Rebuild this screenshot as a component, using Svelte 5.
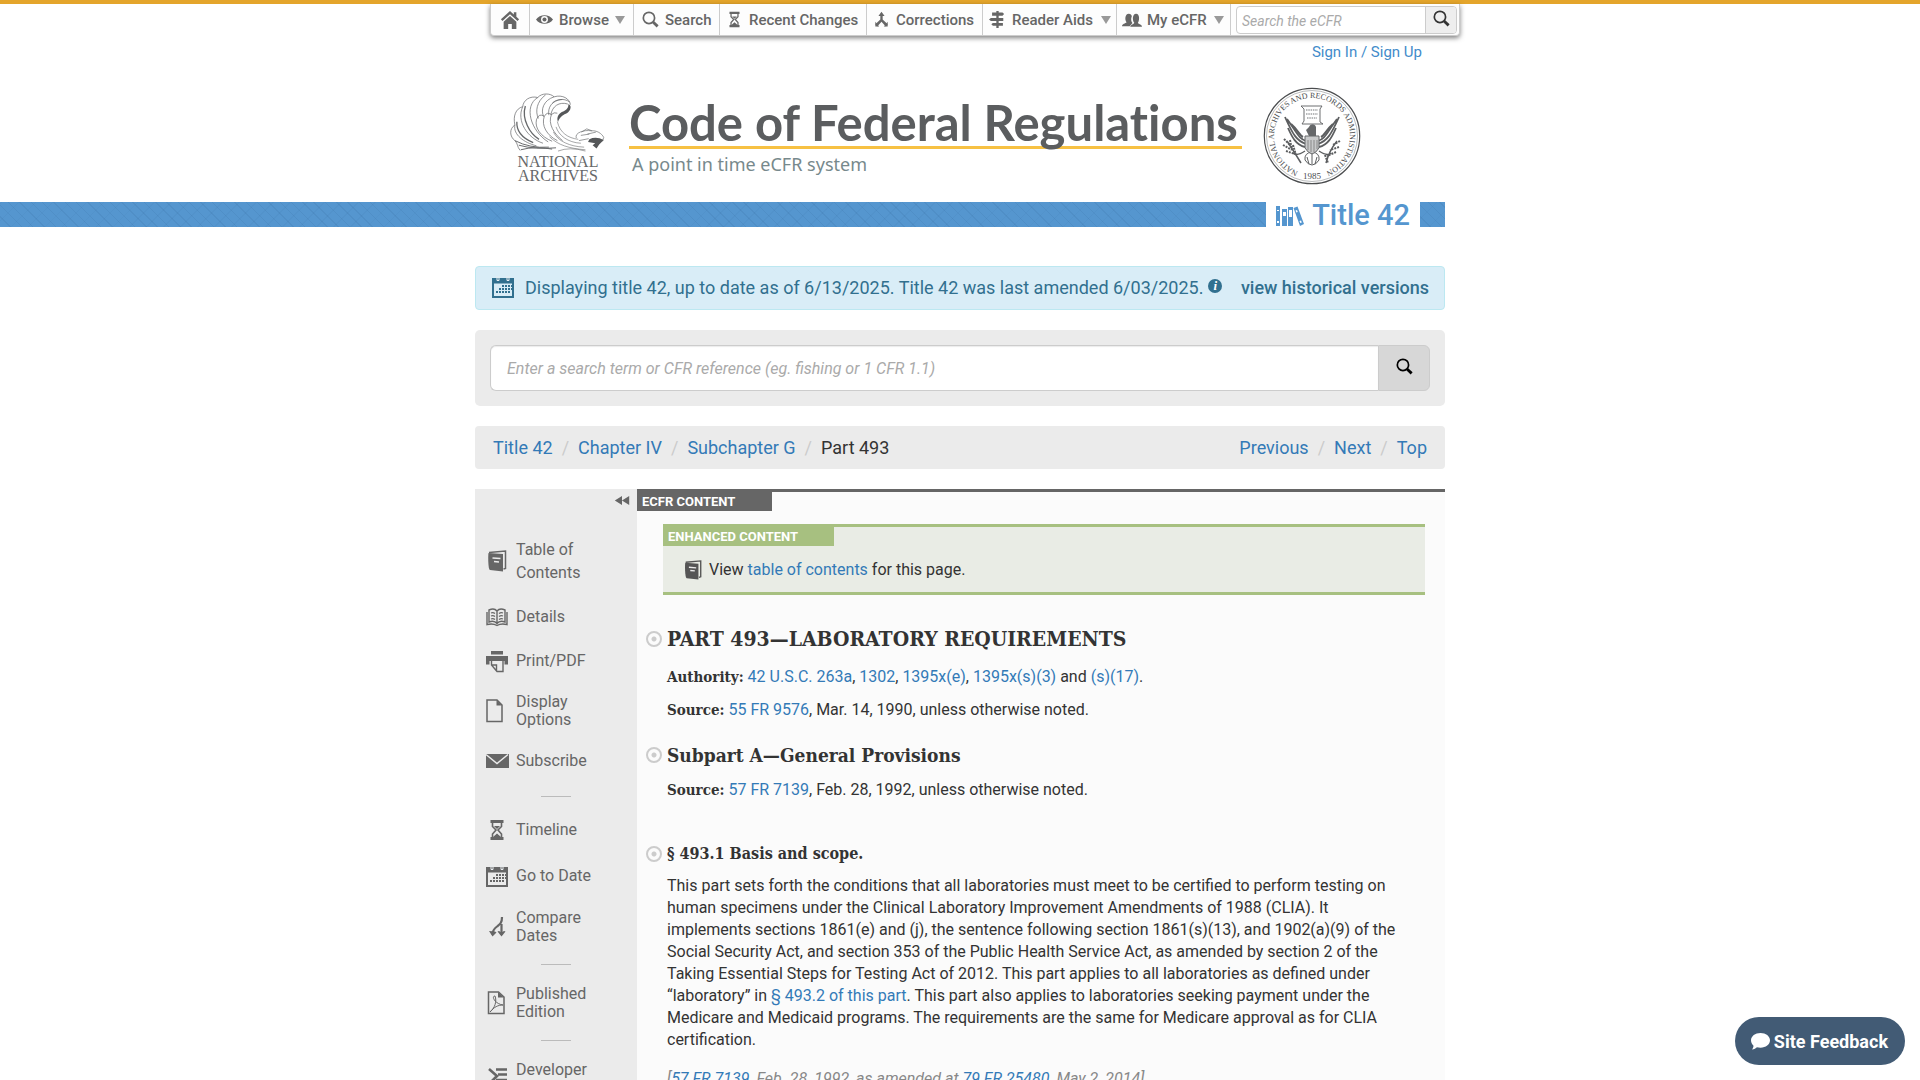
<script>
  const menu = [
    { label: '', name: 'Home', icon: 'home', width: 'w-home' },
    { label: 'Browse', icon: 'eye', drop: true, width: 'w-browse' },
    { label: 'Search', icon: 'lens', width: 'w-search' },
    { label: 'Recent Changes', icon: 'hourglass', width: 'w-recent' },
    { label: 'Corrections', icon: 'merge', width: 'w-corr' },
    { label: 'Reader Aids', icon: 'signs', drop: true, width: 'w-aids' },
    { label: 'My eCFR', icon: 'people', drop: true, width: 'w-my' }
  ];
  const crumbs = ['Title 42', 'Chapter IV', 'Subchapter G'];
  const pager = ['Previous', 'Next', 'Top'];
  const groups = [
    [
      { lines: ['Table of', 'Contents'], icon: 'book', loose: true },
      { lines: ['Details'], icon: 'open' },
      { lines: ['Print/PDF'], icon: 'print' },
      { lines: ['Display', 'Options'], icon: 'sheet' },
      { lines: ['Subscribe'], icon: 'mail' }
    ],
    [
      { lines: ['Timeline'], icon: 'hourglass', tall: true },
      { lines: ['Go to Date'], icon: 'calendar', tall: true },
      { lines: ['Compare', 'Dates'], icon: 'split' }
    ],
    [{ lines: ['Published', 'Edition'], icon: 'pdf' }],
    [{ lines: ['Developer', 'Tools'], icon: 'tools' }]
  ];
  const dots = [
    [9, 9], [12, 9], [15, 9], [18, 9],
    [6, 12], [9, 12], [12, 12], [15, 12], [18, 12],
    [3, 15], [6, 15], [9, 15], [12, 15], [15, 15]
  ];
</script>

{#snippet icon(name)}
  <svg class="icon i-{name}" viewBox="0 0 22 22" aria-hidden="true">
    {#if name === 'home'}
      <path d="M11 1 1 10.300l1.700 1.900L11 4.600l8.300 7.600 1.700-1.900-3-2.800V2.500h-2.800v2.400z" />
      <path d="M11 6.500 4 13v8h5v-5.500h4V21h5v-8z" />
    {:else if name === 'eye'}
      <path fill-rule="evenodd" d="M0 11C5 3.500 17 3.500 22 11 17 18.500 5 18.500 0 11zm11-4.500a4.500 4.500 0 1 0 0 9 4.500 4.500 0 0 0 0-9z" />
      <circle cx="11" cy="11" r="2.600" />
    {:else if name === 'lens'}
      <circle cx="9" cy="9" r="7.300" fill="none" stroke="currentColor" stroke-width="2.200" />
      <path d="m13 15.500 2.500-2.500 6 5.500-2.500 3z" />
    {:else if name === 'hourglass'}
      <path d="M4.500 1h13v3h-13zM4.500 18h13v3h-13z" />
      <path d="M6.500 4v3.500L10 11l-3.500 4v3M15.500 4v3.500L12 11l3.500 4v3" fill="none" stroke="currentColor" stroke-width="1.600" />
      <path d="M8 7h6l-3 3zM7 18l4-3.500 4 3.500z" />
    {:else if name === 'merge'}
      <path d="M11 1 7 6.500h2.500V11L3 17l2.500 3L11 14l5.500 6L19 17l-6.500-6V6.500H15z" />
      <path d="M3 14v6h5zM19 14v6h-5z" />
    {:else if name === 'signs'}
      <path d="M9.500 0h3v2h5l2 2-2 2H4V2h5.500zM9.500 6h3v3h6v4h-16L0 11l2.500-2h7zM5 15.500h4.500V13h3v2.500H18v3.500h-5.500v3h-3v-3H5l-2-1.700z" />
    {:else if name === 'people'}
      <path d="M0 18c0-3 4-3 5-4.500C3 11 3 4 7.500 4c2 0 3 1 3.300 3-1.300 3-.8 6 .7 7.300L8.500 18z" />
      <path d="M9 18.500c1-3 4-2.500 4.500-4.500-2.500-3-2-10 2-10s4 7 2 10c.5 2 4.500 1.500 4.500 4.500z" />
    {:else if name === 'calendar'}
      <path fill-rule="evenodd" d="M0 2h22v20H0zM2 7.500v12.500h18V7.500z" />
      <path d="M5 0v4.500h2V0M15 0v4.500h2V0" fill="none" stroke="#e9edf0" />
      {#each dots as [x, y]}
        <rect x={x + 1} {y} width="2" height="2" />
      {/each}
    {:else if name === 'book'}
      <path d="M2.500 3 17 4v17.500L4 20C2 19.500 2 5 2.500 3z" />
      <path d="M3 2.500 19.500 1v17.500L17.500 19" fill="none" stroke="currentColor" stroke-width="1.500" />
      <path d="m6.500 8 8 .600M8 11.500l5 .5" stroke="#ebebeb" stroke-width="1.500" />
    {:else if name === 'open'}
      <path d="M11 5C9 2.500 6 2.500 3 4v12c3-1.200 6-1 8 1.500 2-2.500 5-2.700 8-1.500V4c-3-1.500-6-1.500-8 1zM11 5v12.500M1 6v12.500c4-1 7-.8 10 1 3-1.800 6-2 10-1V6" fill="none" stroke="currentColor" stroke-width="1.400" />
      <path d="M5 7q2-1 4 .5M5 10q2-1 4 .5M5 13q2-1 4 .5M13 7.500q2-1.500 4-.5M13 10.500q2-1.500 4-.5M13 13.500q2-1.500 4-.5" fill="none" stroke="currentColor" stroke-width="1.200" />
    {:else if name === 'print'}
      <path d="M5 1h12v3.500H5zM0 6h22v8.500h-3.500V11h-15v3.500H0z" />
      <path d="M5.500 10.500v4.500l5.500 6.500h6V10.500M5.500 15h5v6" fill="none" stroke="currentColor" stroke-width="1.400" />
    {:else if name === 'sheet'}
      <path d="M1 0h10l5 5v16.500H1z" fill="none" stroke="currentColor" stroke-width="1.500" />
      <path d="M10.500 0v5.500H16z" />
    {:else if name === 'mail'}
      <path d="M0 4h23v14H0z" />
      <path d="m0 4.500 11 9 11-9" fill="none" stroke="#ebebeb" stroke-width="1.500" />
    {:else if name === 'split'}
      <path d="M16 1c0 6-2 7-5 9.500-3 2.300-4.500 4-4.500 8M15.500 8v11" fill="none" stroke="currentColor" stroke-width="2.200" />
      <path d="m3 15 3.500 5.500 4-4-1.500-1zM11.500 15.500l4 5 4-5-1.500-.5-2.500 1.500-2.500-1.500z" />
    {:else if name === 'pdf'}
      <path d="M2.500 0h10l5.500 5v16.500H2.500z" fill="none" stroke="currentColor" stroke-width="1.500" />
      <path d="M12 0v5.500h6" />
      <path d="M4 20c5-4 7-11 5-16-4 0 0 8 8 9-5 0-9 2-13 7" fill="none" stroke="currentColor" />
    {:else if name === 'tools'}
      <path d="M10 1.500h11M12 6.500h9M10 12h11" stroke="currentColor" stroke-width="2.600" />
      <path d="M3 1l8 7-8 8" fill="none" stroke="currentColor" stroke-width="2.600" />
    {/if}
  </svg>
{/snippet}

<div class="page">
  <div class="container">
    <nav class="menu" aria-label="Main">
      {#each menu as m}
        <a href="#top" class="menu-item {m.width}" aria-label={m.name ?? m.label}>
          {@render icon(m.icon)}
          {#if m.label}<span>{m.label}</span>{/if}
          {#if m.drop}<i class="caret"></i>{/if}
        </a>
      {/each}
      <form class="menu-search">
        <input type="search" aria-label="Search the eCFR" placeholder="Search the eCFR" />
        <button type="button" aria-label="Search">{@render icon('lens')}</button>
      </form>
    </nav>
    <div class="sign"><a href="#sign">Sign In / Sign Up</a></div>
    <header class="brand">
      <div class="archives">
        <svg class="eagle" viewBox="0 0 300 186" aria-hidden="true">
          <g fill="none" stroke="#66686a" stroke-width="2.200">
            <path d="M34 180C24 168 28 160 18 150 2 138 0 114 18 102 12 76 20 52 42 46 44 26 64 12 88 18 100 4 126 4 138 16 164 8 186 22 188 40" />
            <path d="M18 102C12 132 46 156 84 166M42 46C22 90 56 142 104 158M88 18C44 44 66 120 120 154" />
            <path d="M24 92C22 128 50 146 74 156M50 44C38 84 64 130 92 146" stroke-width="4" />
            <path d="M112 10C84 30 80 62 90 82M138 16C106 26 96 56 106 76M164 24C130 26 118 50 122 72" />
            <path d="M180 38c-26-8-48 6-52 34M186 32c-18-14-44-8-54 4" />
            <path d="M84 86q8-22 24-10 8-16 22-6 8-8 18-4M84 86c-6 26 14 52 48 66M108 76c-10 28 8 58 40 74M130 70c-12 28 8 60 34 80" />
            <path d="M18 150q46 24 104 20M30 164q50 14 114 8M36 178q44-12 96-2" stroke-width="3" />
            <path d="M148 92c8 34 32 50 64 54M144 108c8 26 36 48 76 50M136 124c14 28 50 44 94 46M124 138c26 26 60 36 110 40M150 182q36-14 84 0" stroke-width="1.800" />
            <path d="M206 142c-6-16 24-26 46-22 16-2 32 8 38 20l-4 12M220 134l26-4M214 150l30-6M222 124l16-10 16 6M240 130l26-6" stroke-width="2" />
          </g>
          <path d="M182 38c14 6 4 28-12 31-12 6-18 16-20 24-6-16 4-28 16-32 12-6 16-12 16-23zM246 146q20-10 44 2l-14 14-8 12-12-10 8-6-22-4z" fill="#555759" />
        </svg>
        <div class="arch-name">NATIONAL</div>
        <div class="arch-name">ARCHIVES</div>
      </div>
      <div class="wordmark">
        <div class="word">Code of Federal Regulations</div>
        <div class="tag">A point in time eCFR system</div>
      </div>
      <svg class="seal" viewBox="0 0 98 98" aria-label="National Archives seal" role="img">
        <defs><path id="ring" d="M49 87A38 38 0 1 1 49.100 87" /></defs>
        <circle cx="49" cy="49" r="47.700" fill="none" stroke="#4a4c4e" stroke-width="1.200" />
        <circle cx="49" cy="49" r="45.500" fill="none" stroke="#8c8e90" stroke-width=".6" />
        <text class="seal-text" text-anchor="middle"><textPath href="#ring" startOffset="50%">NATIONAL ARCHIVES AND RECORDS ADMINISTRATION</textPath></text>
        <text class="seal-year" x="49" y="92" text-anchor="middle">1985</text>
        <g fill="none" stroke="#5c5e60">
          <path d="M38 19h21l-2 3v13l3 2H39l2-3V22z" stroke-width=".9" />
          <path d="M43 23h12M43 27h12M44 31h10" stroke-dasharray="1.500 .8" stroke-width="1.600" stroke="#a0a2a4" />
          <path d="M43 54C36 52 35 47 24 32M43 57C34 54 30 48 22 30M42 60C33 58 29 50 25 41M55 54c7-2 8-7 19-22M55 57c9-3 13-9 21-27M56 60c9-2 13-10 17-19" stroke-width="1.800" />
          <path d="M40 50c-4-2-5-7-12-13M58 50c4-2 5-7 12-13" stroke-width="2.200" />
          <path d="M42 64c-6 4-10 4-12 2M56 64c6 4 10 4 12 2M24 54q8 12 14 22M74 54q-8 10-11 22" stroke-width="1.500" />
          <path d="M21 52l6 6M20 58l9 5M23 64l9 3M27 53l2 10M30 58l3 10M77 54l-7 4M76 60l-9 3M73 65l-9 4M62 68l3 8" stroke-width="2" stroke-dasharray="2 1" />
          <path d="M42 73q-1-7 7-8 8 1 7 8-3 5-7 5-4 0-7-5zM44 70l2 7M49 66v11M54 70l-2 7" />
        </g>
        <path d="M46 40c2-4 6-3 7 0v9h-7l-3-6z" fill="#66686a" />
        <path d="M42 49h14v12q-3 5-7 6-4-1-7-6z" fill="#c9cacb" stroke="#66686a" />
        <path d="M45 53v10M48 53v12M51 53v12M54 53v9" stroke="#888" />
      </svg>
    </header>
  </div>

  <div class="ribbon">
    <div class="stripe fill"></div>
    <div class="title">
      <svg class="books" viewBox="0 0 28 20" aria-hidden="true">
        <path fill-rule="evenodd" d="M0 0h4v20H0zM1 4v1h2V4zM1 15v2h2v-2zM6 3h5v17H6zM7 6v4h3V6zM12 1h5v19h-5zM13 4v7h3V4z" />
        <path fill-rule="evenodd" d="m17.500 2 4-1.500L28 18l-4 2zM19.500 4.500l.8 2 1.500-.6-.8-2zM23.500 15l.8 2 1.500-.6-.8-2z" />
      </svg>
      <span>Title 42</span>
    </div>
    <div class="stripe cap"></div>
  </div>

  <main class="container">
    <div class="alert">
      {@render icon('calendar')}
      <span>Displaying title 42, up to date as of 6/13/2025. Title 42 was last amended 6/03/2025.</span>
      <span class="info">i</span>
      <a href="#history">view historical versions</a>
    </div>

    <form class="search">
      <input type="search" aria-label="Search term or CFR reference" placeholder="Enter a search term or CFR reference (eg. fishing or 1 CFR 1.1)" />
      <button type="button" aria-label="Search">{@render icon('lens')}</button>
    </form>

    <nav class="crumbs" aria-label="Breadcrumb">
      <ol>
        {#each crumbs as c}<li><a href="#up">{c}</a></li>{/each}
        <li>Part 493</li>
      </ol>
      <ol>
        {#each pager as p}<li><a href="#page">{p}</a></li>{/each}
      </ol>
    </nav>

    <div class="columns">
      <aside class="side">
        <button class="collapse" type="button" aria-label="Collapse">
          <svg viewBox="0 0 16 10" aria-hidden="true"><path d="M8 0v10L0 5zM16 0v10L8 5z" /></svg>
        </button>
        {#each groups as g, i}
          {#if i}<hr class:tight={i > 1} />{/if}
          {#each g as it}
            <a href="#tool" class="tool" class:loose={it.loose} class:tall={it.tall}>
              {@render icon(it.icon)}
              <span>{#each it.lines as l, n}{#if n}<br />{/if}{l}{/each}</span>
            </a>
          {/each}
        {/each}
      </aside>

      <article class="content">
        <div class="tab">ECFR CONTENT</div>
        <section class="enhanced">
          <div class="tab green">ENHANCED CONTENT</div>
          <p>{@render icon('book')}<span>View <a href="#toc">table of contents</a> for this page.</span></p>
        </section>
        <div class="reg">
          <h1><i class="target"></i>PART 493—LABORATORY REQUIREMENTS</h1>
          <p><b>Authority:</b> <a href="#usc">42 U.S.C. 263a</a>, <a href="#usc">1302</a>, <a href="#usc">1395x(e)</a>, <a href="#usc">1395x(s)(3)</a> and <a href="#usc">(s)(17)</a>.</p>
          <p><b>Source:</b> <a href="#fr">55 FR 9576</a>, Mar. 14, 1990, unless otherwise noted.</p>
          <h2><i class="target"></i>Subpart A—General Provisions</h2>
          <p><b>Source:</b> <a href="#fr">57 FR 7139</a>, Feb. 28, 1992, unless otherwise noted.</p>
          <h3><i class="target"></i>§ 493.1 Basis and scope.</h3>
          <p class="body">This part sets forth the conditions that all laboratories must meet to be certified to perform testing on human specimens under the Clinical Laboratory Improvement Amendments of 1988 (CLIA). It implements sections 1861(e) and (j), the sentence following section 1861(s)(13), and 1902(a)(9) of the Social Security Act, and section 353 of the Public Health Service Act, as amended by section 2 of the Taking Essential Steps for Testing Act of 2012. This part applies to all laboratories as defined under “laboratory” in <a href="#s2">§ 493.2 of this part</a>. This part also applies to laboratories seeking payment under the Medicare and Medicaid programs. The requirements are the same for Medicare approval as for CLIA certification.</p>
          <p class="cite">[<a href="#fr">57 FR 7139</a>, Feb. 28, 1992, as amended at <a href="#fr">79 FR 25480</a>, May 2, 2014]</p>
        </div>
      </article>
    </div>
  </main>

  <button class="feedback" type="button">
    <svg viewBox="0 0 19 17" aria-hidden="true"><path d="M9.500 0C14.800 0 19 3.200 19 7.300s-4.200 7.400-9.500 7.400c-1.300 0-2.500-.2-3.600-.5C4.800 15.300 3.200 16.500 1 16.500c.8-1 1.500-2.400 1.500-3.700C1 11.300 0 9.500 0 7.300 0 3.200 4.200 0 9.500 0z" /></svg>
    <span>Site Feedback</span>
  </button>
</div>

<style>
  :global(body) { margin: 0; background: #fff; }
  .page { border-top: 4px solid #e4a52b; font-family: Roboto, "Liberation Sans", sans-serif; font-size: 16px; line-height: 22px; color: #333; }
  .page * { box-sizing: border-box; }
  a { color: #337ab7; text-decoration: none; }
  button, input { font-family: inherit; margin: 0; }
  button { cursor: pointer; }
  .container { max-width: 970px; margin: 0 auto; }
  .icon { width: 22px; height: 22px; flex: none; fill: currentColor; overflow: visible; }

  .menu { display: flex; height: 32px; margin: 0 -15px 0 15px; border: 1px solid #ccc; border-top: 0; border-radius: 0 0 4px 4px; box-shadow: 0 2px 5px rgba(0, 0, 0, .5); background: #fdfdfd; }
  .menu-item { display: flex; align-items: center; gap: 6px; padding: 0 0 0 6px; border-right: 1px solid #ccc; color: #666; font-size: 15px; font-weight: 500; white-space: nowrap; line-height: 20px; }
  .menu-item .icon { width: 17px; height: 17px; }
  .menu-item .i-home, .menu-item .i-people { width: 20px; height: 20px; }
  .menu-item.w-home { width: 39px; padding-left: 9px; }
  .menu-item.w-browse { width: 104px; }
  .menu-item.w-search { width: 86px; padding-left: 8px; }
  .menu-item.w-recent { width: 147px; }
  .menu-item.w-corr { width: 116px; }
  .menu-item.w-aids { width: 134px; }
  .menu-item.w-my { width: 114px; padding-left: 5px; gap: 5px; }
  .caret { width: 0; height: 0; border: 5px solid transparent; border-top: 8px solid #999; border-bottom: 0; }
  .w-aids .caret, .w-my .caret { margin-left: 2px; }
  .menu-search { display: flex; flex: 1; margin: 2px 2px 1px 5px; border: 1px solid #ccc; border-radius: 4px; overflow: hidden; background: #fff; }
  .menu-search input { flex: 1; min-width: 0; border: 0; padding: 2px 5px 0; font-size: 14px; background: transparent; }
  input::placeholder { color: #aaa; font-style: italic; opacity: 1; }
  .menu-search button { display: flex; align-items: center; width: 31px; padding: 0 0 3px 7px; border: 0; border-left: 1px solid #ccc; background: #eee; color: #333; }
  .menu-search .icon { width: 17px; height: 17px; }
  .sign { padding: 6px 23px 0 0; text-align: right; font-size: 15px; line-height: 20px; }
  .sign a { color: #428bca; }

  .brand { display: flex; justify-content: flex-start; height: 140px; padding: 25px 0 0 34px; }
  .archives { width: 98px; margin-right: 22px; padding-top: 4px; }
  .eagle { display: block; width: 98px; height: 62px; margin-bottom: 2px; }
  .arch-name { font-family: "Liberation Serif", serif; font-size: 16px; line-height: 14px; text-align: center; color: #66686a; }
  .wordmark { width: 613px; margin-right: 21px; padding-top: 11px; }
  .word { border-bottom: 3px solid #f7c143; font-family: Lato, "Open Sans", sans-serif; font-weight: 700; font-size: 49px; font-variant-ligatures: none; line-height: 48px; color: #5b5d5f; white-space: nowrap; }
  .tag { padding: 3px 0 0 3px; font-family: "Noto Sans", sans-serif; font-size: 18px; line-height: 24px; color: #77898c; }
  .seal { width: 98px; height: 98px; flex: none; }
  .seal-text { font-family: "Liberation Serif", serif; font-size: 8px; fill: #4a4c4e; }
  .seal-year { font-family: "Liberation Serif", serif; font-size: 9px; fill: #4a4c4e; }

  .ribbon { display: flex; height: 25px; margin-right: calc(50% - 485px); }
  .stripe { background-color: #5596cf; background-image: repeating-linear-gradient(45deg, transparent 0 7px, rgba(40, 90, 140, .12) 7px 8px), repeating-linear-gradient(-45deg, transparent 0 11px, rgba(40, 90, 140, .06) 11px 12px); }
  .fill { flex: 1; }
  .cap { width: 25px; }
  .title { display: flex; align-items: center; gap: 8px; padding: 2px 10px 0; font-size: 29px; font-weight: 500; line-height: 25px; color: #5596cf; }
  .books { width: 28px; height: 20px; fill: currentColor; }

  .alert { display: flex; align-items: center; height: 44px; margin-top: 39px; padding: 0 15px 0 16px; border: 1px solid #bce8f1; border-radius: 4px; background: #d9edf7; color: #31708f; font-size: 18px; white-space: nowrap; }
  .alert .icon { margin: 0 11px 3px 0; }
  .alert a { margin-left: auto; font-weight: 500; color: #31708f; }
  .info { width: 14px; height: 14px; margin: 0 0 5px 5px; border-radius: 50%; background: #31708f; color: #fff; font: italic 700 13px/14px "Liberation Serif", serif; text-align: center; }

  .search { display: flex; margin-top: 20px; padding: 15px; border-radius: 5px; background: #ebebeb; }
  .search input { flex: 1; min-width: 0; height: 46px; padding: 0 16px; border: 1px solid #ccc; border-right: 0; border-radius: 6px 0 0 6px; font-size: 16px; background: #fff; box-shadow: inset 0 1px 1px rgba(0, 0, 0, .08); }
  .search button { width: 52px; padding: 0; border: 1px solid #ccc; border-radius: 0 6px 6px 0; background: #d7d7d7; color: #000; line-height: 17px; }
  .search .icon { width: 17px; height: 17px; }

  .crumbs { display: flex; justify-content: space-between; margin-top: 20px; padding: 10px 18px; border-radius: 4px; background: #ebebeb; font-size: 18px; line-height: 23px; }
  .crumbs ol { display: flex; margin: 0; padding: 0; list-style: none; }
  .crumbs li + li::before { content: "/"; padding: 0 9px; color: #ccc; }

  .columns { display: flex; margin-top: 20px; }
  .side { width: 162px; flex: none; background: #ebebeb; color: #666; }
  .collapse { display: block; margin: 7px 7px 22px auto; padding: 0; border: 0; background: none; line-height: 9px; }
  .collapse svg { width: 16px; height: 9px; fill: #666; }
  .tool { display: flex; align-items: center; gap: 8px; min-height: 44px; padding: 10px 0 10px 11px; color: #666; line-height: 18px; }
  .tool.loose { padding: 11px 0 11px 11px; line-height: 23px; }
  .tool.tall { min-height: 46px; }
  .side hr { width: 30px; margin: 13px auto 10px 66px; border: 0; border-top: 1px solid #bbb; }
  .side hr.tight { margin-top: 9px; }

  .content { flex: 1; min-width: 0; border-top: 3px solid #666; background: #fbfbfb; }
  .tab { width: 135px; padding-left: 5px; background: #666; color: #fff; font-size: 13px; font-weight: 700; line-height: 19px; }
  .green { width: 171px; background: #a7c080; }
  .enhanced { height: 71px; margin: 13px 20px 0 26px; border: solid #a7c080; border-width: 3px 0; background: #e9ece5; }
  .enhanced p { display: flex; align-items: center; gap: 6px; margin: 13px 0 0 20px; }
  .enhanced .icon { width: 20px; height: 20px; color: #555; }
  .reg { padding: 29px 39px 30px 30px; }
  h1, h2, h3 { position: relative; margin: 0; font-family: "DejaVu Serif Condensed", "DejaVu Serif", serif; font-weight: 700; }
  h1 { font-size: 21px; line-height: 30px; }
  h2 { margin-top: 21px; font-size: 19px; line-height: 26px; }
  h3 { margin-top: 41px; font-size: 16px; line-height: 24px; }
  .reg p { margin: 11px 0 0; }
  .reg h1 + p { margin-top: 12px; }
  .reg b { font-family: "DejaVu Serif Condensed", "DejaVu Serif", serif; font-size: 15px; }
  .reg .body { margin-top: 9px; }
  .reg .cite { margin-top: 17px; font-style: italic; color: #888; }
  .target { position: absolute; left: -21px; top: 50%; width: 16px; height: 16px; margin-top: -8px; border: 2px solid #ccc; border-radius: 50%; background: radial-gradient(circle, #ccc 2px, transparent 3px); }

  .feedback { position: fixed; right: 15px; bottom: 15px; display: flex; align-items: center; gap: 4px; height: 48px; padding: 0 17px 0 16px; border: 0; border-radius: 24px; background: #425b75; color: #fff; font-size: 18px; font-weight: 700; }
  .feedback svg { width: 19px; height: 17px; fill: #fff; }
</style>
